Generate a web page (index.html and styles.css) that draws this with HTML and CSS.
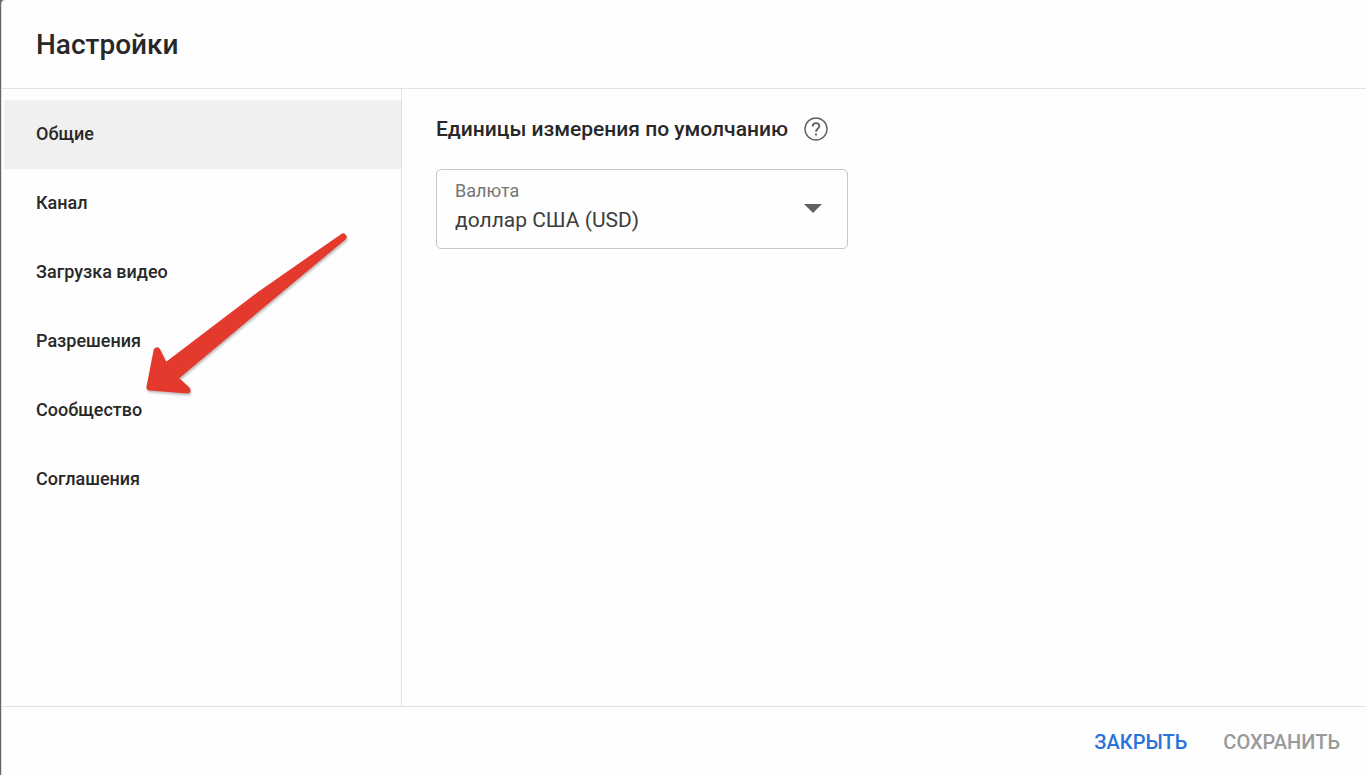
FILE: index.html
```html
<!DOCTYPE html>
<html lang="ru">
<head>
    <meta charset="UTF-8">
    <meta name="viewport" content="width=device-width, initial-scale=1.0">
    <title>Настройки</title>
    <link rel="stylesheet" href="styles.css">
</head>
<body>
    <div class="dialog">
        <header class="header">
            <h1>Настройки</h1>
        </header>

        <div class="content">
            <nav class="menu">
                <a href="#general" class="menu-item active">Общие</a>
                <a href="#channel" class="menu-item">Канал</a>
                <a href="#upload" class="menu-item">Загрузка видео</a>
                <a href="#permissions" class="menu-item">Разрешения</a>
                <a href="#community" class="menu-item">Сообщество</a>
                <a href="#agreements" class="menu-item">Соглашения</a>

                <svg class="arrow" width="212" height="172" viewBox="0 0 212 172">
                    <path d="M202 8 L120 65 L24 138 L16 122 L9 158 L46 161 L33 149 L125 72 Z" fill="#e43a2e" stroke="#e43a2e" stroke-width="7" stroke-linejoin="round"/>
                </svg>
            </nav>

            <main class="panel">
                <div class="panel-title">
                    <h2>Единицы измерения по умолчанию</h2>
                    <button type="button" class="help" aria-label="Справка">
                        <svg width="24" height="24" viewBox="0 0 24 24" fill="none" stroke="#606060">
                            <circle cx="12" cy="12" r="11" stroke-width="1.4"/>
                            <path d="M8.7 9.4C8.7 7.4 10.1 6.1 12 6.1S15.3 7.4 15.3 9.2C15.3 11.6 12 12 12 14.8" stroke-width="1.8"/>
                            <path d="M12 16.4V18.4" stroke-width="1.9"/>
                        </svg>
                    </button>
                </div>

                <div class="field">
                    <label for="currency">Валюта</label>
                    <select id="currency">
                        <option>доллар США (USD)</option>
                    </select>
                    <svg class="field-arrow" width="18" height="9" viewBox="0 0 18 9">
                        <path d="M0 0H18L9 9Z" fill="#606060"/>
                    </svg>
                </div>
            </main>
        </div>

        <footer class="footer">
            <button type="button" class="btn btn-close">ЗАКРЫТЬ</button>
            <button type="button" class="btn btn-save" disabled>СОХРАНИТЬ</button>
        </footer>
    </div>
</body>
</html>
```

FILE: styles.css
```css
* {
    margin: 0;
    padding: 0;
    box-sizing: border-box;
}

body {
    background-color: #666;
    font-family: Roboto, "Liberation Sans", sans-serif;
    color: #282828;
    padding-left: 1px;
}

.dialog {
    display: flex;
    flex-direction: column;
    min-height: 100vh;
    background-color: #fefefe;
    border-left: 1px solid #ddd;
    border-top-left-radius: 4px;
}

/* Шапка */
.header {
    padding: 28px 34px 27px;
    border-bottom: 1px solid #e2e2e2;
}

h1 {
    font-size: 28px;
    font-weight: 500;
    line-height: 33px;
}

.content {
    display: flex;
    flex: 1;
}

/* Боковое меню */
.menu {
    position: relative;
    width: 400px;
    flex-shrink: 0;
    padding: 11px 0 0 2px;
    border-right: 1px solid #e2e2e2;
}

.menu-item {
    display: block;
    padding: 0 32px 2px;
    font-size: 18px;
    font-weight: 500;
    line-height: 67px;
    color: #282828;
    text-decoration: none;
}

.menu-item.active {
    background-color: #f0f0f0;
}

.arrow {
    position: absolute;
    left: 139px;
    top: 140px;
    pointer-events: none;
    filter: drop-shadow(1px 2px 1px rgba(0, 0, 0, 0.25));
}

/* Основная часть */
.panel {
    flex: 1;
    padding: 28px 34px;
}

.panel-title {
    display: flex;
    align-items: center;
    gap: 16px;
    margin-bottom: 28px;
}

h2 {
    font-size: 21px;
    font-weight: 500;
    line-height: 24px;
}

.help {
    display: flex;
    border: none;
    background: none;
    cursor: pointer;
}

.field {
    position: relative;
    max-width: 412px;
}

.field label {
    position: absolute;
    left: 19px;
    top: 12px;
    font-size: 18px;
    line-height: 20px;
    color: #757575;
    pointer-events: none;
}

.field select {
    display: block;
    width: 100%;
    height: 80px;
    padding: 22px 48px 0 18px;
    border: 1px solid #c6c6c6;
    border-radius: 5px;
    background-color: #fefefe;
    font-family: inherit;
    font-size: 21px;
    color: #3c3c3c;
    appearance: none;
    cursor: pointer;
}

.field-arrow {
    position: absolute;
    right: 26px;
    top: 35px;
    pointer-events: none;
}

/* Кнопки */
.footer {
    display: flex;
    justify-content: flex-end;
    gap: 36px;
    padding: 23px 26px 21px;
    border-top: 1px solid #e2e2e2;
}

.btn {
    border: none;
    background: none;
    font-family: inherit;
    font-size: 20px;
    font-weight: 500;
    line-height: 24px;
    cursor: pointer;
}

.btn-close {
    color: #2a72dc;
}

.btn-save {
    color: #9a9a9a;
    cursor: default;
}
```
